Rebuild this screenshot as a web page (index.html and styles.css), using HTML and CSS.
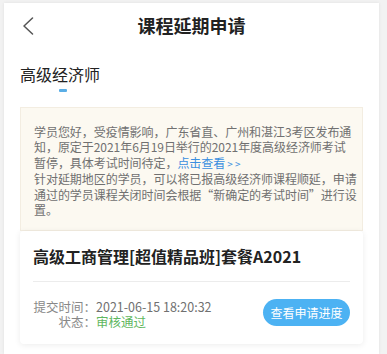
FILE: index.html
```html
<!DOCTYPE html>
<html lang="zh-CN">
<head>
<meta charset="utf-8">
<title>课程延期申请</title>
<link rel="stylesheet" href="styles.css">
</head>
<body>
<div class="panel">
  <header class="header">
    <div class="back">
      <svg width="12" height="18" viewBox="0 0 12 18"><polyline points="10.5,1 2,9 10.5,17" fill="none" stroke="#555" stroke-width="1.5" stroke-linejoin="round" stroke-linecap="round"/></svg>
    </div>
    <h1 class="title">课程延期申请</h1>
    <div></div>
  </header>
  <div class="tab">
    <div class="tab-text">高级经济师</div>
    <div class="tab-bar"></div>
  </div>
  <div class="notice">
    <div class="line">学员您好，受疫情影响，广东省直、广州和湛江3考区发布通</div>
    <div class="line">知，原定于2021年6月19日举行的2021年度高级经济师考试</div>
    <div class="line">暂停，具体考试时间待定，<span class="link">点击查看<span class="gt">&gt; &gt;</span></span></div>
    <div class="line">针对延期地区的学员，可以将已报高级经济师课程顺延，申请</div>
    <div class="line">通过的学员课程关闭时间会根据“新确定的考试时间”进行设</div>
    <div class="line">置。</div>
  </div>
  <div class="card">
    <div class="card-title">高级工商管理[超值精品班]套餐A2021</div>
    <div class="divider"></div>
    <div class="info">
      <div class="rows">
        <div class="label">提交时间：</div><div class="value">2021-06-15 18:20:32</div>
        <div class="label">状态：</div><div class="value ok">审核通过</div>
      </div>
      <div class="btn">查看申请进度</div>
    </div>
  </div>
</div>
</body>
</html>
```
FILE: styles.css
```css
html, body {
  margin: 0;
  padding: 0;
}
body {
  background: #f2f2f2;
  font-family: "Noto Sans CJK SC", "Noto Sans", sans-serif;
  color: #333;
}
.panel {
  margin: 3px 8px 0 4px;
  background: #fff;
  min-height: 351px;
  box-shadow: 0 0 3px rgba(0,0,0,0.08);
}
.header {
  height: 44px;
  display: grid;
  grid-template-columns: 1fr auto 1fr;
  align-items: center;
}
.back {
  padding-left: 18px;
  padding-top: 1px;
  display: flex;
}
.title {
  margin: 0;
  font-size: 18px;
  font-weight: 700;
  color: #222;
  line-height: 44px;
}
.tab {
  padding-left: 16px;
  margin-top: 16px;
}
.tab-text {
  font-size: 16px;
  line-height: 22px;
  color: #222;
  width: 80px;
}
.tab-bar {
  width: 8px;
  height: 3px;
  border-radius: 1px;
  background: #5aaee6;
  margin: 4px 0 0 39px;
}
.notice {
  margin: 15px 16px 0 16px;
  background: #fcf9f1;
  border: 1px solid #f3ede1;
  padding: 16px 10px 13px 13px;
  font-size: 12px;
  line-height: 15.4px;
  color: #707070;
}
.line {
  white-space: nowrap;
  letter-spacing: -0.05px;
}
.link {
  color: #3a8fe0;
}
.gt {
  font-size: 10px;
  margin-left: 2px;
}
.card {
  margin: 0 16px;
  background: #fff;
  border-radius: 4px;
  box-shadow: 0 1px 6px rgba(0,0,0,0.08);
  padding: 13px 13px 15px 13px;
}
.card-title {
  font-size: 16px;
  line-height: 24px;
  font-weight: 700;
  color: #222;
}
.divider {
  height: 1px;
  background: #ececec;
  margin-top: 13px;
}
.info {
  margin-top: 17px;
  display: flex;
  align-items: center;
  justify-content: space-between;
}
.rows {
  display: grid;
  grid-template-columns: 63px auto;
  font-size: 12.5px;
  line-height: 15px;
}
.label {
  text-align: right;
  color: #888;
  white-space: nowrap;
}
.value {
  color: #707070;
}
.ok {
  color: #5fb760;
}
.btn {
  width: 87px;
  height: 27px;
  border-radius: 14px;
  background: #4cb2f3;
  color: #fff;
  font-size: 12px;
  line-height: 27px;
  text-align: center;
  margin-top: -3px;
}
```
